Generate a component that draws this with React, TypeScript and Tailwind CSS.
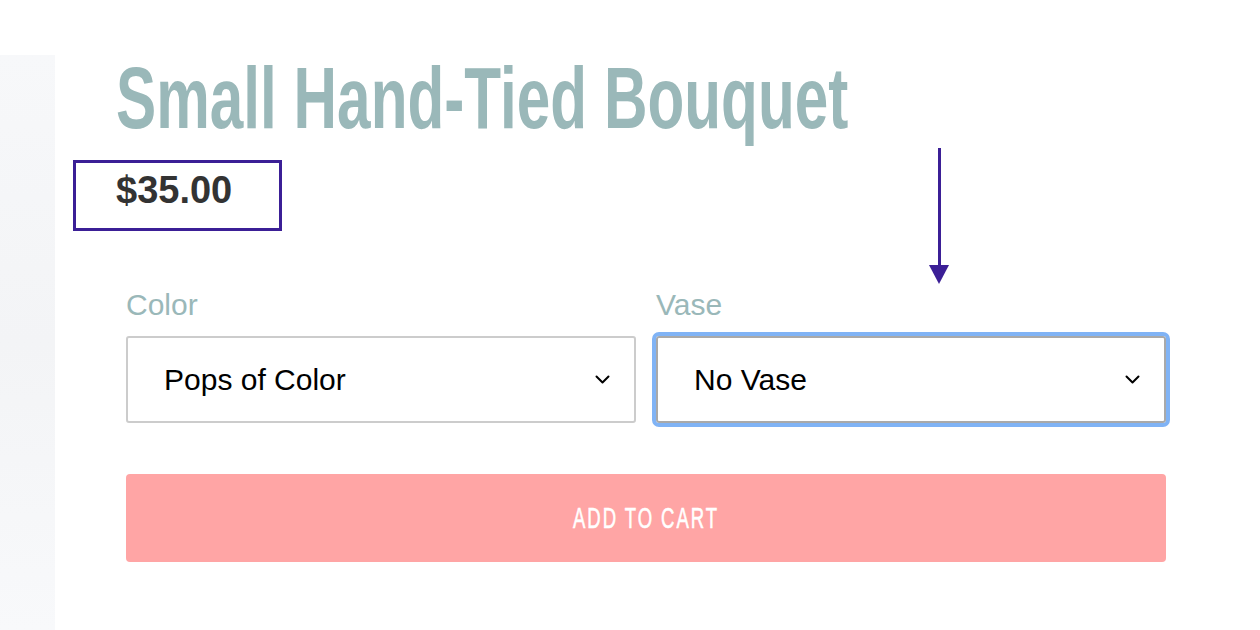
export default function App() {
  return (
    <div className="flex h-[630px] w-[1260px] overflow-hidden bg-white font-['Liberation_Sans',Arial,sans-serif]">
      {/* blurred product image edge */}
      <div className="mt-[55px] w-[55px] shrink-0 bg-gradient-to-b from-[#f7f8fa] via-[#f3f4f6] to-[#f8f9fb]" />

      <div className="relative min-w-0 flex-1 pl-[71px] pr-[94px]">
        <h1 className="-ml-[10px] pt-[54px] text-[88px] font-bold leading-[88px] whitespace-nowrap text-[#9ab8b9]">
          <span className="inline-block origin-left scale-x-[0.685]">Small Hand-Tied Bouquet</span>
        </h1>

        <div className="relative -ml-[10px] mt-[29px] w-fit">
          <div className="text-[38px] font-bold leading-[38px] text-[#333333]">$35.00</div>
          <div className="absolute -left-[43px] -top-[11px] h-[71px] w-[209px] border-[3px] border-[#3b1f96]" />
        </div>

        {/* annotation arrow */}
        <div className="absolute left-[874px] top-[148px] flex flex-col items-center">
          <div className="h-[118px] w-[3px] bg-[#3b1f96]" />
          <svg width="20" height="19" viewBox="0 0 20 19" className="-mt-[1px]">
            <polygon points="0,0 20,0 10,19" fill="#3b1f96" />
          </svg>
        </div>

        <div className="mt-[81px] grid grid-cols-2 gap-[20px]">
          <SelectField label="Color" value="Pops of Color" />
          <SelectField label="Vase" value="No Vase" focused />
        </div>

        <button className="mt-[51px] flex h-[88px] w-full items-center justify-center rounded-[4px] bg-[#ffa5a5] text-white">
          <span className="inline-block scale-x-[0.64] text-[29px] leading-none tracking-[3px] [-webkit-text-stroke:0.6px_white]">ADD TO CART</span>
        </button>
      </div>
    </div>
  );
}

function SelectField({ label, value, focused }: { label: string; value: string; focused?: boolean }) {
  return (
    <div>
      <div className="text-[30px] leading-[30px] text-[#9ab8b9]">{label}</div>
      <div
        className={
          focused
            ? 'mt-[16px] flex h-[87px] items-center justify-between rounded-[3px] border-2 border-[#a9a9a9] pl-[36px] pr-[24px] text-[30px] text-black outline-[4px] outline-[#80b3f5] outline-offset-0 [outline-style:solid]'
            : 'mt-[16px] flex h-[87px] items-center justify-between rounded-[3px] border-2 border-[#cccccc] pl-[36px] pr-[24px] text-[30px] text-black'
        }
      >
        <span>{value}</span>
        <svg width="15" height="9" viewBox="0 0 15 9" fill="none">
          <path d="M1.5 1.5 L7.5 7.5 L13.5 1.5" stroke="#000" strokeWidth="2" strokeLinecap="round" strokeLinejoin="round" />
        </svg>
      </div>
    </div>
  );
}
